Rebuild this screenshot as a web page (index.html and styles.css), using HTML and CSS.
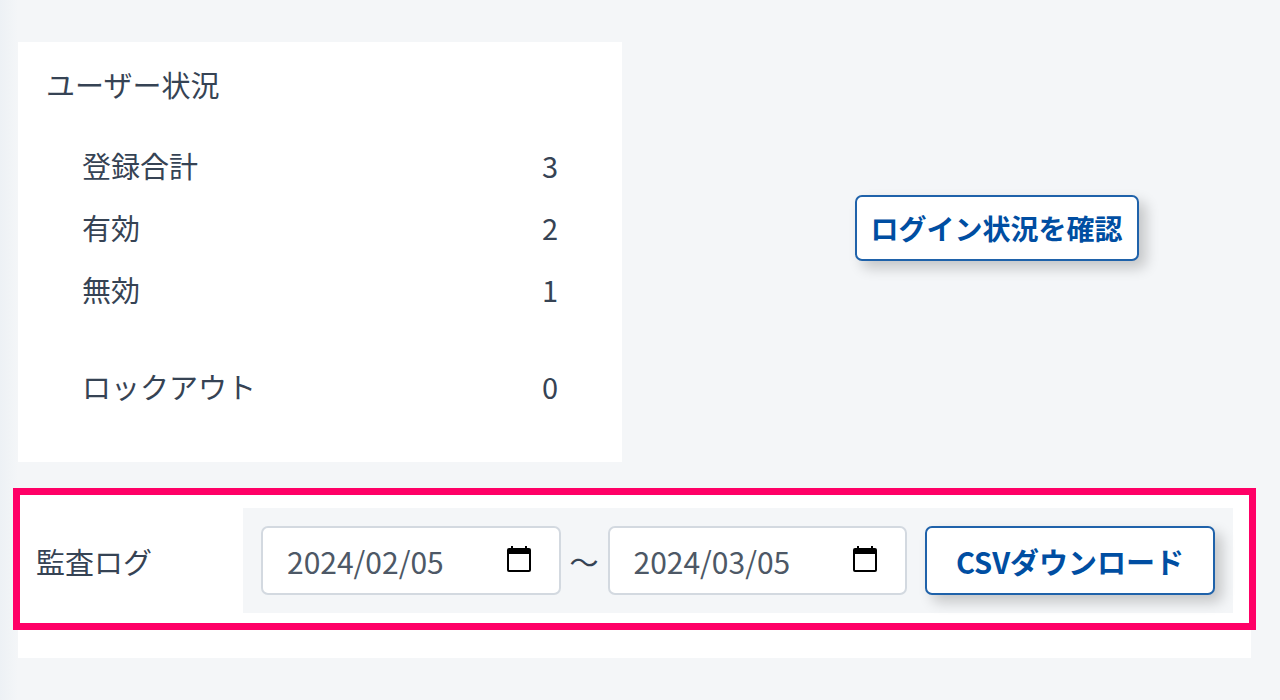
FILE: index.html
```html
<!DOCTYPE html>
<html lang="ja">
    <head>
        <meta charset="utf-8">
        <title>ユーザー状況</title>
        <link rel="stylesheet" href="styles.css">
    </head>
    <body>
        <main class="container">
            <div class="top">
                <section class="card status">
                    <h2>ユーザー状況</h2>
                    <table>
                        <tbody>
                            <tr><th scope="row">登録合計</th><td>3</td></tr>
                            <tr><th scope="row">有効</th><td>2</td></tr>
                            <tr><th scope="row">無効</th><td>1</td></tr>
                        </tbody>
                        <tbody class="lockout">
                            <tr><th scope="row">ロックアウト</th><td>0</td></tr>
                        </tbody>
                    </table>
                </section>
                <div class="login">
                    <button type="button" class="btn">ログイン状況を確認</button>
                </div>
            </div>
            <section class="card audit">
                <h2 id="auditTitle">監査ログ</h2>
                <form class="panel" aria-labelledby="auditTitle">
                    <div class="date">
                        <input type="text" name="from" value="2024/02/05" aria-label="開始日">
                        <button type="button" aria-label="開始日を選択">
                            <svg viewBox="0 0 24 26"><path fill-rule="evenodd" d="M4 0h2v2h12V0h2v2h2a2 2 0 0 1 2 2v20a2 2 0 0 1-2 2H2a2 2 0 0 1-2-2V4a2 2 0 0 1 2-2h2zM2 8v16h20V8z"/></svg>
                        </button>
                    </div>
                    <span class="tilde">～</span>
                    <div class="date">
                        <input type="text" name="to" value="2024/03/05" aria-label="終了日">
                        <button type="button" aria-label="終了日を選択">
                            <svg viewBox="0 0 24 26"><path fill-rule="evenodd" d="M4 0h2v2h12V0h2v2h2a2 2 0 0 1 2 2v20a2 2 0 0 1-2 2H2a2 2 0 0 1-2-2V4a2 2 0 0 1 2-2h2zM2 8v16h20V8z"/></svg>
                        </button>
                    </div>
                    <button type="button" class="btn csv">CSVダウンロード</button>
                </form>
            </section>
        </main>
    </body>
</html>
```
FILE: styles.css
```css
* {
    box-sizing: border-box;
}

body {
    margin: 0;
    min-height: 100vh;
    background: linear-gradient(to right, #edf1f5, #f4f6f8 18px);
    color: #364354;
    font-family: "Noto Sans CJK JP", sans-serif;
    font-size: 29px;
    line-height: 44px;
}

input, button {
    font-family: inherit;
}

h2 {
    margin: 0;
    font-size: 29px;
    font-weight: normal;
}

.container {
    padding: 42px 29px 42px 18px;
}

.top {
    display: flex;
    gap: 120px;
}

.card {
    background-color: white;
}

.status {
    width: 49%;
    padding: 20px 28px 45px;
}

.status table {
    width: calc(100% - 72px);
    margin: 28px 36px 0;
    border-collapse: collapse;
}

.status th, .status td {
    height: 62px;
    padding: 0;
    text-align: left;
    font-weight: normal;
}

.status td {
    text-align: right;
}

.lockout::before {
    content: "";
    display: block;
    height: 35px;
}

.login {
    flex: 1;
    padding-top: 153px;
    text-align: center;
}

.btn {
    height: 66px;
    padding: 0 14px;
    border: 2px solid #1f62aa;
    border-radius: 7px;
    background-color: white;
    color: #004ea2;
    font-size: 28px;
    font-weight: bold;
    white-space: nowrap;
    box-shadow: 7px 7px 14px rgba(0, 0, 0, 0.2);
    cursor: pointer;
}

/* highlighted row */
.audit {
    position: relative;
    display: flex;
    align-items: center;
    margin-top: 28px;
    padding: 18px 18px 45px;
}

.audit::after {
    content: "";
    position: absolute;
    inset: -2px -5px 28px;
    border: 7px solid #ff0066;
    pointer-events: none;
}

.audit h2 {
    flex: none;
    width: 207px;
}

.panel {
    flex: 1;
    display: flex;
    align-items: center;
    min-width: 0;
    padding: 18px;
    background-color: #f4f6f8;
}

.date {
    flex: 1;
    display: flex;
    align-items: center;
    min-width: 0;
    height: 69px;
    padding: 0 28px 0 24px;
    border: 2px solid #d3d9e0;
    border-radius: 7px;
    background-color: white;
}

.date input {
    flex: 1;
    min-width: 0;
    padding: 0;
    border: none;
    background: none;
    color: #4d5866;
    font-size: 30px;
}

.date button {
    display: flex;
    padding: 0;
    border: none;
    background: none;
    cursor: pointer;
}

.date svg {
    width: 24px;
    height: 26px;
    margin-bottom: 4px;
}

.tilde {
    flex: none;
    width: 47px;
    text-align: center;
}

.csv {
    flex: none;
    width: 290px;
    height: 69px;
    margin-left: 18px;
    font-size: 29px;
}
```
